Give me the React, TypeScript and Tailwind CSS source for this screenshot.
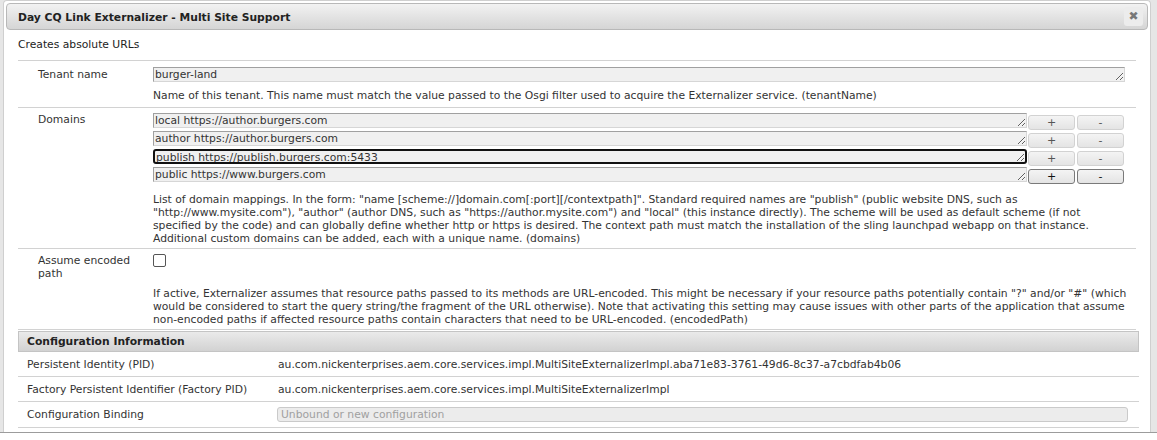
import React from "react";

const domains = [
  "local https://author.burgers.com",
  "author https://author.burgers.com",
  "publish https://publish.burgers.com:5433",
  "public https://www.burgers.com",
];

function Field({ value, width, focused }: { value: string; width: string; focused?: boolean }) {
  return (
    <textarea
      readOnly
      rows={1}
      defaultValue={value}
      className={
        "block h-[15px] shrink-0 resize overflow-hidden bg-[#f0f0f0] px-[1px] py-0 text-[10.75px] leading-[13px] text-[#333] outline-none " +
        width +
        (focused
          ? " rounded-[3px] border-2 border-[#111]"
          : " border border-t-[#a0a0a0] border-l-[#a0a0a0] border-r-[#d6d6d6] border-b-[#d6d6d6]")
      }
      style={{ fontFamily: "inherit" }}
    />
  );
}

function PmButton({ label, dark }: { label: string; dark?: boolean }) {
  return (
    <button
      className={
        "flex h-[15px] w-[47px] items-center justify-center rounded-[3px] border bg-gradient-to-b from-[#f4f4f4] to-[#e4e4e4] text-[11px] leading-none " +
        (dark ? "border-[#7a7a7a] text-[#111]" : "border-[#d2d2d2] text-[#555]")
      }
    >
      {label}
    </button>
  );
}

export default function App() {
  return (
    <div
      className="h-[440px] w-[1157px] overflow-hidden bg-white text-[10.75px] leading-[13px] text-[#333]"
      style={{ fontFamily: '"DejaVu Sans", Verdana, sans-serif' }}
    >
      <div className="flex h-[433px] border-b border-[#9c9c9c] bg-[#e6e6e6] pl-[3px] pr-[6px]">
        <div className="flex flex-1 flex-col overflow-hidden rounded-t-[4px] border border-b-0 border-[#cfcfcf] bg-white px-[2px] pt-[2px]">
          {/* title bar */}
          <div className="flex h-[27px] shrink-0 items-center justify-between rounded-[4px] border border-[#b8b8b8] bg-gradient-to-b from-[#f2f2f2] to-[#d5d5d5] pl-[11px] pr-[4px]">
            <span className="pt-[1px] font-bold text-[#222]">Day CQ Link Externalizer - Multi Site Support</span>
            <span className="flex h-[19px] w-[19px] items-center justify-center rounded-[3px] bg-[#ececec] text-[12px] text-[#777]">
              ✖
            </span>
          </div>

          <div className="shrink-0 pl-[12px] pr-[12px]">
            <div className="pt-[8px] pb-[9px] text-[#222]">Creates absolute URLs</div>

            {/* properties */}
            <div className="border-t border-[#d2d2d2]">
              <div className="flex border-b border-[#d2d2d2] pt-[6px] pb-[5px]">
                <div className="w-[135px] shrink-0 pl-[20px] pt-[1px]">Tenant name</div>
                <div className="flex-1 pr-[10px]">
                  <Field value="burger-land" width="w-[972px]" />
                  <div className="mt-[7px] whitespace-nowrap">
                    Name of this tenant. This name must match the value passed to the Osgi filter used to acquire the
                    Externalizer service. (tenantName)
                  </div>
                </div>
              </div>

              <div className="flex border-b border-[#d2d2d2] pt-[5px] pb-[3px]">
                <div className="w-[135px] shrink-0 pl-[20px]">Domains</div>
                <div className="flex-1">
                  <div className="flex flex-col gap-[3px]">
                    {domains.map((d, i) => (
                      <div key={d} className="flex h-[15px] items-start">
                        <Field value={d} width="w-[874px]" focused={i === 2} />
                        <div className="ml-[1px] mt-[2px] flex gap-[2px]">
                          <PmButton label="+" dark={i === 3} />
                          <PmButton label="-" dark={i === 3} />
                        </div>
                      </div>
                    ))}
                  </div>
                  <div className="mt-[11px] whitespace-nowrap">
                    List of domain mappings. In the form: "name [scheme://]domain.com[:port][/contextpath]". Standard
                    required names are "publish" (public website DNS, such as
                    <br />
                    "http://www.mysite.com"), "author" (author DNS, such as "https://author.mysite.com") and "local" (this
                    instance directly). The scheme will be used as default scheme (if not
                    <br />
                    specified by the code) and can globally define whether http or https is desired. The context path must
                    match the installation of the sling launchpad webapp on that instance.
                    <br />
                    Additional custom domains can be added, each with a unique name. (domains)
                  </div>
                </div>
              </div>

              <div className="flex border-b border-[#d2d2d2] pt-[5px] pb-[3px]">
                <div className="w-[135px] shrink-0 pl-[20px]">
                  Assume encoded
                  <br />
                  path
                </div>
                <div className="flex-1">
                  <div className="h-[13px] w-[13px] rounded-[2px] border border-[#555] bg-white" />
                  <div className="mt-[20px] whitespace-nowrap">
                    If active, Externalizer assumes that resource paths passed to its methods are URL-encoded. This might
                    be necessary if your resource paths potentially contain "?" and/or "#" (which
                    <br />
                    would be considered to start the query string/the fragment of the URL otherwise). Note that activating
                    this setting may cause issues with other parts of the application that assume
                    <br />
                    non-encoded paths if affected resource paths contain characters that need to be URL-encoded.
                    (encodedPath)
                  </div>
                </div>
              </div>
            </div>

            {/* configuration information */}
            <div className="mt-[1px] mr-[-3px]">
              <div className="flex h-[21px] items-center border border-[#c4c4c4] bg-gradient-to-b from-[#eaeaea] to-[#d2d2d2] pl-[8px] font-bold text-[#222]">
                Configuration Information
              </div>
              <div className="flex h-[25px] items-center border-b border-[#d2d2d2]">
                <div className="w-[260px] shrink-0 pl-[9px]">Persistent Identity (PID)</div>
                <div>
                  au.com.nickenterprises.aem.core.services.impl.MultiSiteExternalizerImpl.aba71e83-3761-49d6-8c37-a7cbdfab4b06
                </div>
              </div>
              <div className="flex h-[25px] items-center border-b border-[#d2d2d2]">
                <div className="w-[260px] shrink-0 pl-[9px]">Factory Persistent Identifier (Factory PID)</div>
                <div>au.com.nickenterprises.aem.core.services.impl.MultiSiteExternalizerImpl</div>
              </div>
              <div className="flex h-[26px] items-center border-b border-[#d2d2d2]">
                <div className="w-[259px] shrink-0 pl-[9px]">Configuration Binding</div>
                <div className="flex h-[15px] w-[851px] items-center rounded-[3px] border border-[#cacaca] bg-[#ececec] pl-[3px] text-[#a0a0a0]">
                  Unbound or new configuration
                </div>
              </div>
            </div>
          </div>
        </div>
      </div>
    </div>
  );
}
